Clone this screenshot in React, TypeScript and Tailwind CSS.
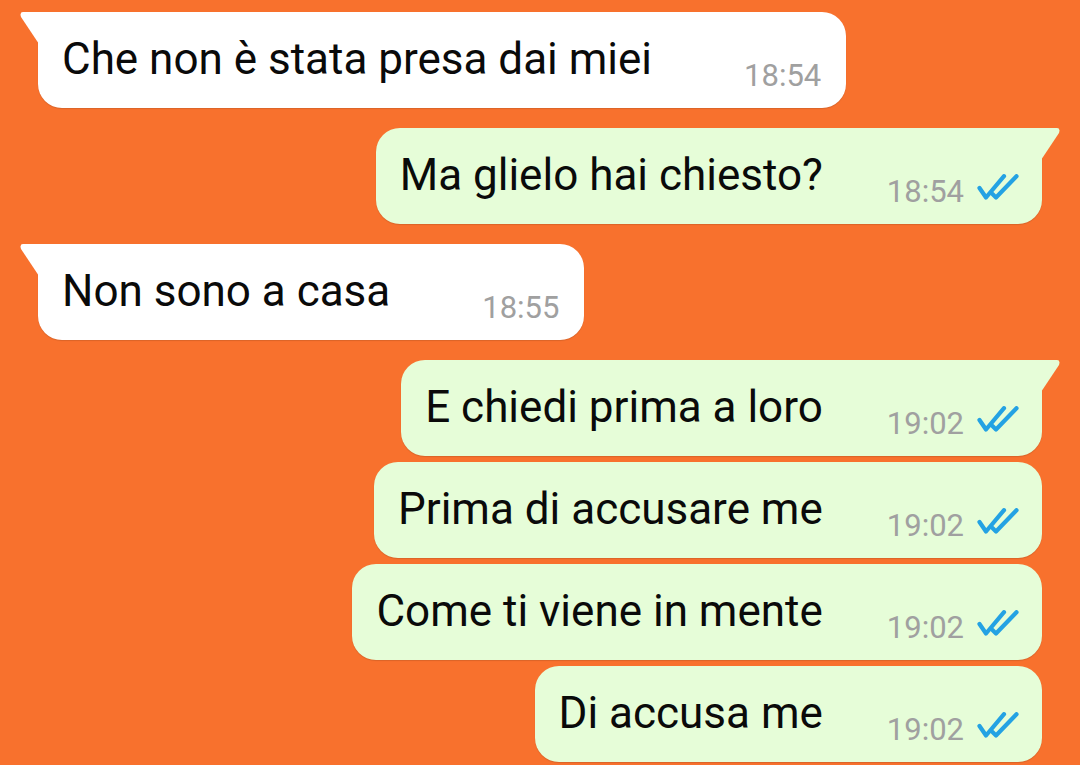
type Msg = { text: string; time: string; out: boolean; first: boolean };

const messages: Msg[] = [
  { text: "Che non è stata presa dai miei", time: "18:54", out: false, first: true },
  { text: "Ma glielo hai chiesto?", time: "18:54", out: true, first: true },
  { text: "Non sono a casa", time: "18:55", out: false, first: true },
  { text: "E chiedi prima a loro", time: "19:02", out: true, first: true },
  { text: "Prima di accusare me", time: "19:02", out: true, first: false },
  { text: "Come ti viene in mente", time: "19:02", out: true, first: false },
  { text: "Di accusa me", time: "19:02", out: true, first: false },
];

function DoubleCheck() {
  return (
    <svg width="42" height="26" viewBox="0 0 42 26" className="mt-[-2px] ml-[13px] shrink-0">
      <g fill="none" stroke="#24a2e3" strokeWidth="4.2" strokeLinecap="round" strokeLinejoin="round">
        <polyline points="2.5,14 9,23.5 27,2.2" />
        <polyline points="15.5,20 19,23.5 39.5,2.2" />
      </g>
    </svg>
  );
}

function Tail({ out }: { out: boolean }) {
  return (
    <svg
      width="24"
      height="32"
      viewBox="0 0 24 32"
      className={out ? "absolute top-0 right-[-18px] -scale-x-100" : "absolute top-0 left-[-18px]"}
    >
      <path d="M3 0 H24 V32 H19 L1 5 Q-0.5 0 3 0 Z" fill={out ? "#e6fdd8" : "#ffffff"} />
    </svg>
  );
}

function Bubble({ m }: { m: Msg }) {
  const shape = m.first
    ? m.out
      ? "rounded-[24px] rounded-tr-none"
      : "rounded-[24px] rounded-tl-none"
    : "rounded-[24px]";
  return (
    <div className={m.out ? "flex justify-end" : "flex justify-start"}>
      <div
        className={`relative flex items-start pt-[20px] pb-[17px] pl-[24px] ${m.out ? "pr-[23px] bg-[#e6fdd8]" : "pr-[25px] bg-white"} ${shape} shadow-[0_1px_1px_rgba(0,0,0,0.12)]`}
      >
        {m.first && <Tail out={m.out} />}
        <span className="mt-[1px] text-[44px] leading-[52px] text-[#0a0a0a] whitespace-nowrap">{m.text}</span>
        <div className={`flex items-start mt-[28px] ${m.out ? "ml-[64px]" : "ml-[92px]"}`}>
          <span className="text-[31px] leading-[31px] text-[#a0a0a0]">{m.time}</span>
          {m.out && <DoubleCheck />}
        </div>
      </div>
    </div>
  );
}

export default function App() {
  return (
    <div
      className="w-[1080px] h-[765px] overflow-hidden bg-[#f8712d] pt-[12px] pl-[38px] pr-[38px] flex flex-col"
      style={{ fontFamily: "Roboto, 'Noto Sans', sans-serif" }}
    >
      {messages.map((m, i) => {
        const prev = messages[i - 1];
        const gap = i === 0 ? "" : prev.out === m.out ? "mt-[6px]" : "mt-[20px]";
        return (
          <div key={i} className={gap}>
            <Bubble m={m} />
          </div>
        );
      })}
    </div>
  );
}
